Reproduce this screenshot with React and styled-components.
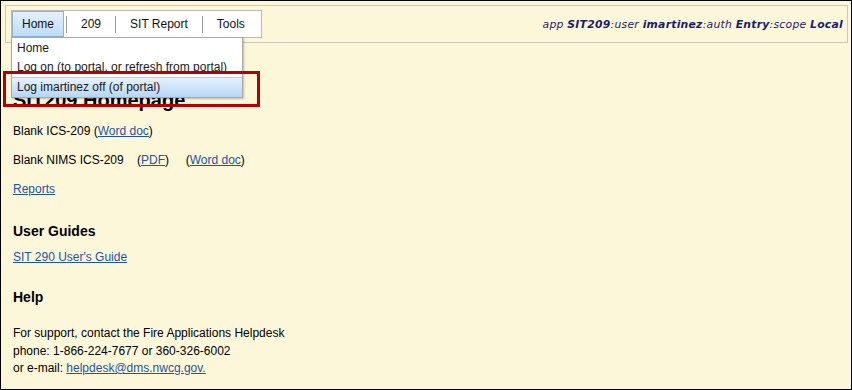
import { Fragment } from "react";
import styled, { createGlobalStyle } from "styled-components";

const GlobalStyle = createGlobalStyle`
  html, body {
    margin: 0;
    padding: 0;
    background: #fdf7da;
  }
  * {
    box-sizing: border-box;
  }
`;

const tabs = ["Home", "209", "SIT Report", "Tools"];

export default function App() {
  return (
    <>
      <GlobalStyle />
      <Page>
        <Header>
          <MenuBar>
            {tabs.map((t, i) => (
              <Fragment key={t}>
                {i > 0 && <Separator />}
                <Tab $active={i === 0}>{t}</Tab>
              </Fragment>
            ))}
          </MenuBar>
          <Status>
            app <b>SIT209</b>:user <b>imartinez</b>:auth <b>Entry</b>:scope <b>Local</b>
          </Status>
        </Header>

        <Content>
          <Title>SIT209 Homepage</Title>
          <Line>
            Blank ICS-209 (<Link href="#">Word doc</Link>)
          </Line>
          <Line>
            Blank NIMS ICS-209&nbsp;&nbsp;&nbsp;&nbsp;(<Link href="#">PDF</Link>)&nbsp;&nbsp;&nbsp;&nbsp;&nbsp;(<Link href="#">Word doc</Link>)
          </Line>
          <Line>
            <Link href="#">Reports</Link>
          </Line>
          <Section $gap={25}>User Guides</Section>
          <Line $tight>
            <Link href="#">SIT 290 User's Guide</Link>
          </Line>
          <Section $gap={23}>Help</Section>
          <Support>
            For support, contact the Fire Applications Helpdesk
            <br />
            phone: 1-866-224-7677 or 360-326-6002
            <br />
            or e-mail: <Link href="#">helpdesk@dms.nwcg.gov.</Link>
          </Support>
        </Content>

        <Dropdown>
          <Item>Home</Item>
          <Item>Log on (to portal, or refresh from portal)</Item>
          <Divider />
          <Item $active>Log imartinez off (of portal)</Item>
        </Dropdown>
        <Highlight />
      </Page>
    </>
  );
}

const Page = styled.div`
  position: relative;
  width: 852px;
  height: 390px;
  border: 1px solid #000;
  background: #fdf7da;
  font-family: "Liberation Sans", Arial, sans-serif;
  font-size: 12px;
  color: #000;
  overflow: hidden;
`;

const Header = styled.div`
  margin: 4px 3px 0 4px;
  height: 38px;
  border: 1px solid #c9c8bd;
  display: flex;
  align-items: center;
  justify-content: space-between;
  padding: 0 4px 0 5px;
`;

const MenuBar = styled.div`
  display: flex;
  align-items: center;
  height: 28px;
  background: #fff;
  border: 1px solid #b9b9b9;
  padding-right: 2px;
`;

const Tab = styled.div`
  height: 100%;
  display: flex;
  align-items: center;
  white-space: nowrap;
  padding: ${(p) => (p.$active ? "0 9px" : "0 14px")};
  margin-right: ${(p) => (p.$active ? "2px" : "0")};
  color: #111;
  font-size: 12px;
  background: ${(p) =>
    p.$active ? "linear-gradient(#e4f1fd, #bcdcf7)" : "transparent"};
  border: ${(p) => (p.$active ? "1px solid #8fb3d6" : "none")};
`;

const Separator = styled.div`
  width: 1px;
  height: 17px;
  background: #9a9a9a;
  flex-shrink: 0;
`;

const Status = styled.div`
  font-family: "DejaVu Sans", Verdana, sans-serif;
  font-size: 10.8px;
  font-style: italic;
  color: #1c1c6e;
  letter-spacing: 0.25px;
  white-space: nowrap;

  b {
    font-weight: bold;
  }
`;

const Content = styled.div`
  padding: 0 12px;
`;

const Title = styled.h1`
  margin: 46px 0 0;
  font-size: 20px;
  line-height: 23px;
  font-weight: bold;
`;

const Line = styled.div`
  line-height: 16px;
  margin-top: ${(p) => (p.$tight ? "9px" : "11px")};
  & + & {
    margin-top: 13px;
  }
`;

const Section = styled.h2`
  margin: ${(p) => p.$gap}px 0 0;
  font-size: 14px;
  line-height: 18px;
  font-weight: bold;
`;

const Support = styled.div`
  margin-top: 19px;
  line-height: 17.5px;
`;

const Link = styled.a`
  color: #2154a8;
  text-decoration: underline;
`;

const Dropdown = styled.div`
  position: absolute;
  top: 36px;
  left: 10px;
  width: 232px;
  height: 61px;
  background: #fff;
  border: 1px solid #a9a9a9;
  box-shadow: 1px 1px 2px rgba(0, 0, 0, 0.25);
  display: flex;
  flex-direction: column;
`;

const Item = styled.div`
  height: 20px;
  display: flex;
  align-items: center;
  padding-left: 5px;
  font-size: 12px;
  white-space: nowrap;
  color: #1a1a1a;
  background: ${(p) =>
    p.$active ? "linear-gradient(#e6f2fd, #b6d6f5)" : "transparent"};
`;

const Divider = styled.div`
  height: 1px;
  background: #c9c9c9;
`;

const Highlight = styled.div`
  position: absolute;
  top: 70px;
  left: 2px;
  width: 257px;
  height: 36px;
  border: 3px solid #b40000;
`;
